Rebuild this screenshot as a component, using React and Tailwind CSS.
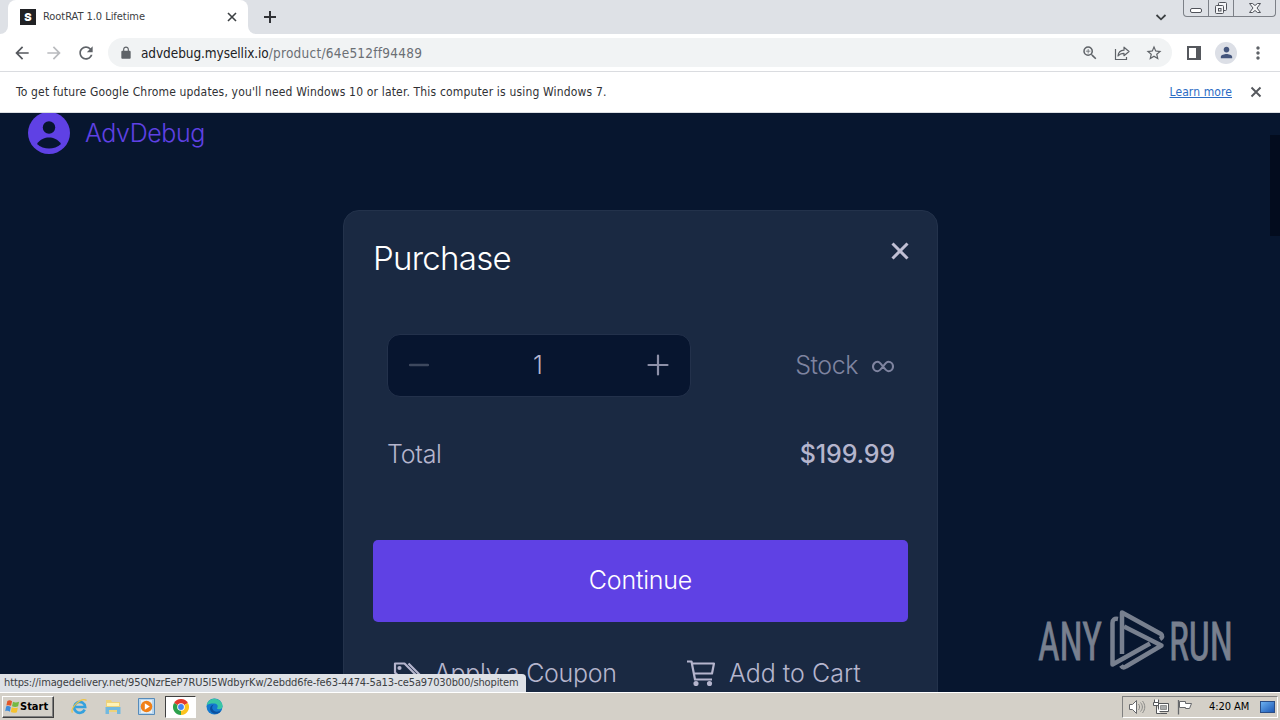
import React from "react";

const ui = "font-['DejaVu_Sans_Condensed','DejaVu_Sans',sans-serif] [font-stretch:condensed]";

function Icon({ className, viewBox = "0 0 24 24", children }) {
  return (
    <svg className={"block shrink-0 " + className} viewBox={viewBox} fill="currentColor">
      {children}
    </svg>
  );
}

function TabStrip() {
  return (
    <header className="flex h-[34px] shrink-0 bg-[#dee1e6]">
      <div className="w-2 bg-white">
        <div className="h-full rounded-br-lg bg-[#dee1e6]" />
      </div>
      <div className="flex w-[240px] items-center rounded-t-lg bg-white pr-2.5 pl-3">
        <div className="flex size-4 items-center justify-center bg-[#202124] font-['Inter',sans-serif] text-[11px] font-black text-white">
          S
        </div>
        <span className="ml-[7px] flex-1 pt-px text-[11px] tracking-[-0.05px] whitespace-nowrap text-[#3c4043]">
          RootRAT 1.0 Lifetime
        </span>
        <svg className="size-3" viewBox="0 0 12 12" stroke="#3c4043" strokeWidth="1.6">
          <path d="M2 2l8 8M10 2l-8 8" />
        </svg>
      </div>
      <div className="w-2 bg-white">
        <div className="h-full rounded-bl-lg bg-[#dee1e6]" />
      </div>
      <svg className="mt-2.5 ml-[7px] size-3.5" viewBox="0 0 14 14" stroke="#303236" strokeWidth="2">
        <path d="M7 1v12M1 7h12" />
      </svg>
      <div className="flex-1" />
      <svg className="mt-[11px] mr-4 h-3 w-3" viewBox="0 0 12 12" fill="none" stroke="#3c4043" strokeWidth="1.8">
        <path d="M1.5 4l4.5 4.3L10.500 4" />
      </svg>
      <div className="mr-1 flex h-[17px] w-[93px] rounded-b-[4px] border border-t-0 border-[#7c8087] text-[#505359]">
        <div className="flex w-[25px] items-end justify-center border-r border-[#7c8087] pb-[3px]">
          <div className="h-[5px] w-3 rounded-[2px] border border-[#50535a] bg-white" />
        </div>
        <div className="flex w-[25px] items-center justify-center border-r border-[#7c8087]">
          <svg className="size-3.5" viewBox="0 0 14 14" fill="#f4f5f7" stroke="#50535a">
            <rect x="4.500" y="1.500" width="8" height="8" rx="1" />
            <rect x="1.500" y="4.500" width="8" height="8" rx="1" />
            <rect x="4.500" y="7.500" width="2.500" height="2.500" />
          </svg>
        </div>
        <div className="flex flex-1 items-center justify-center">
          <svg className="h-3 w-3.5" viewBox="0 0 14 12" fill="#f4f5f7" stroke="#50535a">
            <path d="M1.500 1.500h3l2.500 2 2.500-2h3L9 6l3.500 4.500h-3L7 8.500l-2.500 2h-3L5 6z" />
          </svg>
        </div>
      </div>
    </header>
  );
}

function Toolbar() {
  return (
    <div className="flex h-[38px] shrink-0 items-center border-b border-[#dadce0] bg-white pl-3 text-[#5f6368]">
      <Icon className="size-5 text-[#55585d]">
        <path d="M20 11H7.830l5.590-5.590L12 4l-8 8 8 8 1.410-1.410L7.830 13H20v-2z" />
      </Icon>
      <Icon className="ml-3 size-5 text-[#b9bbbe]">
        <path d="M12 4l-1.410 1.410L16.170 11H4v2h12.170l-5.580 5.590L12 20l8-8z" />
      </Icon>
      <Icon className="ml-3 size-5">
        <path d="M17.650 6.350C16.200 4.900 14.210 4 12 4c-4.420 0-7.990 3.580-7.990 8s3.570 8 7.990 8c3.730 0 6.840-2.550 7.730-6h-2.080c-.82 2.330-3.040 4-5.650 4-3.310 0-6-2.690-6-6s2.690-6 6-6c1.660 0 3.140.69 4.220 1.780L13 11h7V4l-2.350 2.350z" />
      </Icon>
      <div className="ml-3 flex h-[29px] w-[1064px] items-center rounded-full bg-[#f1f3f4] pr-[9px] pl-[11px]">
        <Icon className="size-3.5">
          <path d="M18 8h-1V6c0-2.760-2.240-5-5-5S7 3.240 7 6v2H6c-1.100 0-2 .9-2 2v10c0 1.100.9 2 2 2h12c1.100 0 2-.9 2-2V10c0-1.100-.9-2-2-2zM9 6c0-1.660 1.340-3 3-3s3 1.340 3 3v2H9V6z" />
        </Icon>
        <span className="ml-2 flex-1 pt-px text-[13.500px] tracking-[0.24px] whitespace-nowrap text-[#6b6f74]">
          <span className="tracking-[-0.08px] text-[#202124]">advdebug.mysellix.io</span>/product/64e512ff94489
        </span>
        <Icon className="size-[18px]">
          <path d="M15.500 14h-.79l-.28-.27A6.471 6.471 0 0 0 16 9.500 6.500 6.500 0 1 0 9.500 16c1.610 0 3.090-.59 4.230-1.570l.27.28v.79l5 4.990L20.490 19l-4.990-5zm-6 0C7.010 14 5 11.990 5 9.500S7.010 5 9.500 5 14 7.010 14 9.500 11.990 14 9.500 14zM12.500 10H10v2.500H9V10H6.500V9H9V6.500h1V9h2.500v1z" />
        </Icon>
        <svg className="ml-[14px] size-[18px]" viewBox="0 0 18 18" fill="none" stroke="#5f6368" strokeWidth="1.200">
          <path d="M2.500 5v10.500h11V13" />
          <path d="M5 12c.3-3.500 2-5.500 6-5.800V3.200l5 4.300-5 4.200V9.300c-2.500 0-4.500.8-6 2.700z" strokeLinejoin="round" />
        </svg>
        <Icon className="ml-[14px] size-[18px]">
          <path d="M22 9.240l-7.190-.62L12 2 9.190 8.630 2 9.240l5.460 4.730L5.820 21 12 17.270 18.180 21l-1.630-7.030L22 9.240zM12 15.400l-3.760 2.270 1-4.280-3.320-2.880 4.380-.38L12 6.100l1.710 4.040 4.380.38-3.320 2.880 1 4.280L12 15.400z" />
        </Icon>
      </div>
      <div className="ml-[15px] h-3.5 w-3.5 border-2 border-r-[5px] border-[#55585d]" />
      <div className="ml-3.5 flex size-[22px] items-center justify-center rounded-full bg-[#dcdfe6]">
        <Icon className="size-[17px] text-[#44557c]">
          <path d="M12 12c2.210 0 4-1.790 4-4s-1.790-4-4-4-4 1.790-4 4 1.790 4 4 4zm0 2c-2.670 0-8 1.340-8 4v2h16v-2c0-2.660-5.330-4-8-4z" />
        </Icon>
      </div>
      <Icon className="ml-[11px] size-5">
        <path d="M12 8c1.100 0 2-.9 2-2s-.9-2-2-2-2 .9-2 2 .9 2 2 2zm0 2c-1.100 0-2 .9-2 2s.9 2 2 2 2-.9 2-2-.9-2-2-2zm0 6c-1.100 0-2 .9-2 2s.9 2 2 2 2-.9 2-2-.9-2-2-2z" />
      </Icon>
    </div>
  );
}

function InfoBar() {
  return (
    <div className="flex h-[41px] shrink-0 items-center border-b border-[#dcdfe3] bg-white pr-[18px] pl-4 text-[12px] whitespace-nowrap text-[#303134]">
      <span className="flex-1 tracking-[0.165px]">
        To get future Google Chrome updates, you'll need Windows 10 or later. This computer is using Windows 7.
      </span>
      <span className="tracking-[0.1px] text-[#2b6cc4] underline">Learn more</span>
      <svg className="ml-[18px] size-3" viewBox="0 0 12 12" stroke="#55585d" strokeWidth="1.900">
        <path d="M1.500 1.500l9 9M10.500 1.500l-9 9" />
      </svg>
    </div>
  );
}

function Quantity() {
  return (
    <div className="flex h-[63px] w-[304px] items-center justify-between rounded-[13px] border border-[#23314b] bg-[#07152f] px-[21px]">
      <svg className="mb-px size-5" viewBox="0 0 20 20" stroke="#3d485e" strokeWidth="2.400" strokeLinecap="round">
        <path d="M1 10h18" />
      </svg>
      <span className="pt-px text-[25px] font-light">1</span>
      <svg className="mb-px size-[22px]" viewBox="0 0 22 22" stroke="#8d90a8" strokeWidth="2.200" strokeLinecap="round">
        <path d="M1.500 11h19M11 1.500v19" />
      </svg>
    </div>
  );
}

function PurchaseCard() {
  return (
    <section className="mt-[57px] ml-[343px] h-[540px] w-[595px] shrink-0 rounded-t-2xl border border-[#23324b] bg-[#1a2942] px-[29px] text-[25px] text-[#b5b5cd]">
      <div className="flex justify-between pt-[26px]">
        <h1 className="text-[33px] leading-[42px] font-[350] tracking-[-0.7px] text-white">Purchase</h1>
        <svg className="mt-1 mr-[-2px] size-5" viewBox="0 0 20 20" stroke="#c0bfd4" strokeWidth="3">
          <path d="M2.500 2.500l15 15M17.500 2.500l-15 15" />
        </svg>
      </div>
      <div className="mt-[55px] flex items-center justify-between px-3.5">
        <Quantity />
        <div className="flex items-center text-[#7f84a0]">
          <span className="pt-px font-[350] tracking-[-0.45px]">Stock</span>
          <svg className="mt-px ml-3.5 h-[13px] w-[22px]" viewBox="0 0 22 13" fill="none" stroke="#7f84a0" strokeWidth="2.100">
            <path d="M11 6.500C8.500 3 7.500 1.800 5.500 1.800a4.500 4.700 0 0 0 0 9.400c2 0 3-1.200 5.500-4.700s3.500-4.700 5.500-4.700a4.500 4.700 0 0 1 0 9.400c-2 0-3-1.200-5.500-4.700z" />
          </svg>
        </div>
      </div>
      <div className="mt-[37px] flex justify-between px-3.5 leading-10">
        <span className="font-[350] tracking-[-0.25px]">Total</span>
        <span className="mr-[-1px] font-medium tracking-[-0.15px]">$199.99</span>
      </div>
      <button className="mt-[66px] flex h-[82px] w-full items-center justify-center rounded-[5px] bg-[#5f41e4] font-[350] tracking-[-0.2px] text-white">
        Continue
      </button>
      <div className="mt-[31px] flex whitespace-nowrap leading-10 font-[350]">
        <div className="flex w-[314px] items-center pl-5">
          <svg className="size-7" viewBox="0 0 28 28" fill="none" stroke="#b5b5cd" strokeWidth="2.200">
            <path d="M2 4.500h9.500L23 16l-9 9L2 13.500z" strokeLinejoin="round" />
            <path d="M15.500 4.500L27 16l-3.500 4" />
            <circle cx="6.500" cy="9" r="1" fill="#b5b5cd" />
          </svg>
          <span className="ml-[13px] tracking-[-0.3px]">Apply a Coupon</span>
        </div>
        <div className="flex items-center">
          <svg className="h-[26px] w-7" viewBox="0 0 28 26" fill="none" stroke="#b5b5cd" strokeWidth="2.200">
            <path d="M0 1.500h4.500L8 19.500h17M5 3.500h22L25 13.500H7" strokeLinejoin="round" />
            <circle cx="9" cy="23.500" r="1.500" fill="#b5b5cd" />
            <circle cx="22.500" cy="23.500" r="1.500" fill="#b5b5cd" />
          </svg>
          <span className="ml-3.5">Add to Cart</span>
        </div>
      </div>
    </section>
  );
}

function Watermark() {
  return (
    <svg
      className="absolute top-[495px] right-[44px] h-[66px] w-[198px] overflow-visible opacity-90"
      viewBox="0 0 198 66"
      fill="#858c9a"
      stroke="#858c9a"
    >
      <text x="0" y="51.500" fontFamily="Roboto, sans-serif" fontSize="53" strokeWidth="0.800" textLength="64" lengthAdjust="spacingAndGlyphs">ANY</text>
      <text x="131" y="51.500" fontFamily="Roboto, sans-serif" fontSize="53" strokeWidth="0.800" textLength="64" lengthAdjust="spacingAndGlyphs">RUN</text>
      <g fill="none" strokeWidth="4.500" strokeLinejoin="round">
        <path d="M80 11q-5.500-1-5.500 4V56.500L112 35.500" />
        <path d="M84 46V4.500L123 26q3 2.500-1 5" />
        <path d="M86 18.500L123.500 37.500 88 58.500q-3 2-5-1" />
      </g>
    </svg>
  );
}

function Page() {
  return (
    <main className="relative flex h-[579px] shrink-0 flex-col overflow-hidden bg-[#07162f] font-['Inter',sans-serif]">
      <div className="flex h-10 shrink-0 items-center pl-7 text-[#5f41e4]">
        <svg className="size-[42px]" viewBox="0 0 42 42">
          <circle cx="21" cy="21" r="21" fill="#5f41e4" />
          <circle cx="21" cy="15.500" r="6.200" fill="#07152f" />
          <path d="M9 32c3-5 8-6.500 12-6.500s9 1.500 12 6.500c-3 3-8 4.500-12 4.500S12 35 9 32z" fill="#07152f" />
        </svg>
        <span className="ml-[15px] pt-0.5 text-[25px] font-light tracking-[-0.4px]">AdvDebug</span>
      </div>
      <PurchaseCard />
      <div className="absolute top-[22px] right-0 h-[101px] w-2.5 bg-[#030c1e]" />
      <Watermark />
      <div className={ui + " absolute bottom-0 left-0 flex h-[18px] w-[526px] items-center rounded-tr bg-[#dee1e6] pt-px pl-1 text-[11px] tracking-[-0.12px] whitespace-nowrap text-[#3c4043]"}>
        https://imagedelivery.net/95QNzrEeP7RU5l5WdbyrKw/2ebdd6fe-fe63-4474-5a13-ce5a97030b00/shopitem
      </div>
    </main>
  );
}

function Taskbar() {
  return (
    <footer className="flex h-7 shrink-0 items-center border-t border-white bg-[#d4d0c8] text-black">
      <div className="ml-0.5 flex h-[22px] w-[52px] items-center border border-t-white border-r-[#404040] border-b-[#404040] border-l-white pl-0.5 shadow-[inset_-1px_-1px_0_#808080]">
        <svg className="size-[15px] shrink-0" viewBox="0 0 16 16">
          <path d="M2.500 2C4.500 1 6 1.300 7.500 2.300L6.500 7.300C5 6.500 3.500 6.300 1.500 7z" fill="#e2582a" />
          <path d="M8.500 2.800c2 1.200 4 1 6.500 0l-1 5c-2.500 1-4.500.8-6.500-.2z" fill="#74b943" />
          <path d="M1.200 8c2-.8 3.500-.5 5 .5l-1 5c-1.500-1-3-1.200-5-.5z" fill="#3f8ddb" />
          <path d="M7.200 8.800c2 1 4 1.200 6.500.2l-1 5c-2.500 1-4.500.8-6.500-.2z" fill="#f6c22e" />
        </svg>
        <span className="pt-0.5 text-[11px] font-bold">Start</span>
      </div>
      <svg className="ml-[17px] size-[17px]" viewBox="0 0 18 18" fill="none">
        <path d="M14.500 12.300A5.800 5.800 0 1 1 15 9.500H5" stroke="#35a1dd" strokeWidth="2.800" />
        <path d="M1.500 15.500C-1 11 10-1 16.500 2.500" stroke="#efc444" strokeWidth="1.300" />
      </svg>
      <svg className="ml-4 size-[18px]" viewBox="0 0 18 18">
        <path d="M2 2h5l1 2h8v10H2z" fill="#edd27b" />
        <path d="M3 5h12v3H3z" fill="#fff3b5" />
        <path d="M1.500 9h15v7H13v-4H5v4H1.500z" fill="#72b9df" />
      </svg>
      <svg className="ml-4 size-[17px]" viewBox="0 0 17 17">
        <path d="M.5.500h16v16H.5z" fill="#b9d6ee" stroke="#568bba" />
        <path d="M3 2h11v13H3z" fill="#e6f0f7" />
        <circle cx="8.500" cy="8.500" r="5.800" fill="#f08018" />
        <path d="M6.800 5.300l5 3.200-5 3.200z" fill="#fff" />
      </svg>
      <div className="ml-2.5 flex h-[22px] w-[31px] items-center justify-center border border-t-[#404040] border-r-white border-b-white border-l-[#404040] bg-white">
        <svg className="size-4" viewBox="0 0 16 16">
          <path d="M8 8L1.070 4A8 8 0 0 1 14.930 4z" fill="#e33b2e" />
          <path d="M8 8V16A8 8 0 0 1 1.070 4z" fill="#2da14c" />
          <path d="M8 8L14.930 4A8 8 0 0 1 8 16z" fill="#fcc31e" />
          <circle cx="8" cy="8" r="3.800" fill="#fff" />
          <circle cx="8" cy="8" r="2.900" fill="#4285f4" />
        </svg>
      </div>
      <svg className="ml-2.5 size-[17px]" viewBox="0 0 17 17">
        <circle cx="8.500" cy="8.500" r="8" fill="#1479cf" />
        <path d="M.7 7C2 1 8-.5 12 1.500c4 2 5.500 6 4 8.500-1.200 2-5 1.500-5 .2 1.500-2 .5-4.500-2.500-4.700C5 5.300 2 6 .7 7z" fill="#39c6a4" />
        <path d="M8 6.500c-3 2-2 6 1.500 7 2 .5 4 0 5.500-1-2 4-6.500 4-9 2-3-2.500-2.500-7 2-8z" fill="#0b4f9e" />
      </svg>
      <div className="flex-1" />
      <div className="mr-0.5 flex h-[22px] w-[156px] items-center border border-t-[#808080] border-r-white border-b-white border-l-[#808080] pl-[6px]">
        <svg className="h-4 w-[17px] shrink-0" viewBox="0 0 17 16" fill="none" stroke="#66686b">
          <path d="M.5 5.500h3l4-4v13l-4-4h-3z" fill="#fff" />
          <path d="M9.500 5c1.500 2 1.500 4 0 6M11.500 3.500c2.500 3 2.500 6 0 9M13.500 2c3 4 3 8 0 12" stroke="#8b8b89" />
        </svg>
        <svg className="ml-[7px] size-4 shrink-0" viewBox="0 0 16 16" fill="#fff" stroke="#55575a">
          <path d="M5.500 4.500h10v8h-10zM7 14.500h7" />
          <path d="M7.500 6.500h6v4h-6z" fill="#a8aaab" stroke="#909292" />
          <path d="M1.500.5v3h4v-3M.5 3.500h5v3h-5zM3.500 6.500v8h4" />
        </svg>
        <svg className="ml-2 size-4 shrink-0" viewBox="0 0 16 16" fill="#fff" stroke="#66686b">
          <path d="M1.500 1v14.500" strokeWidth="1.300" />
          <path d="M2.500 2.500h6v2h6l-2 5h-4v-1h-6z" />
        </svg>
        <span className="ml-4 pt-0.5 text-[11px] tracking-[-0.05px] whitespace-nowrap">4:20 AM</span>
        <div className="mr-0.5 ml-auto h-3 w-[15px] border border-[#294d86] bg-gradient-to-br from-[#6cb1f0] to-[#1c57b4]" />
      </div>
    </footer>
  );
}

export default function App() {
  return (
    <div className={ui + " flex h-[720px] w-[1280px] flex-col overflow-hidden"}>
      <TabStrip />
      <Toolbar />
      <InfoBar />
      <Page />
      <Taskbar />
    </div>
  );
}
